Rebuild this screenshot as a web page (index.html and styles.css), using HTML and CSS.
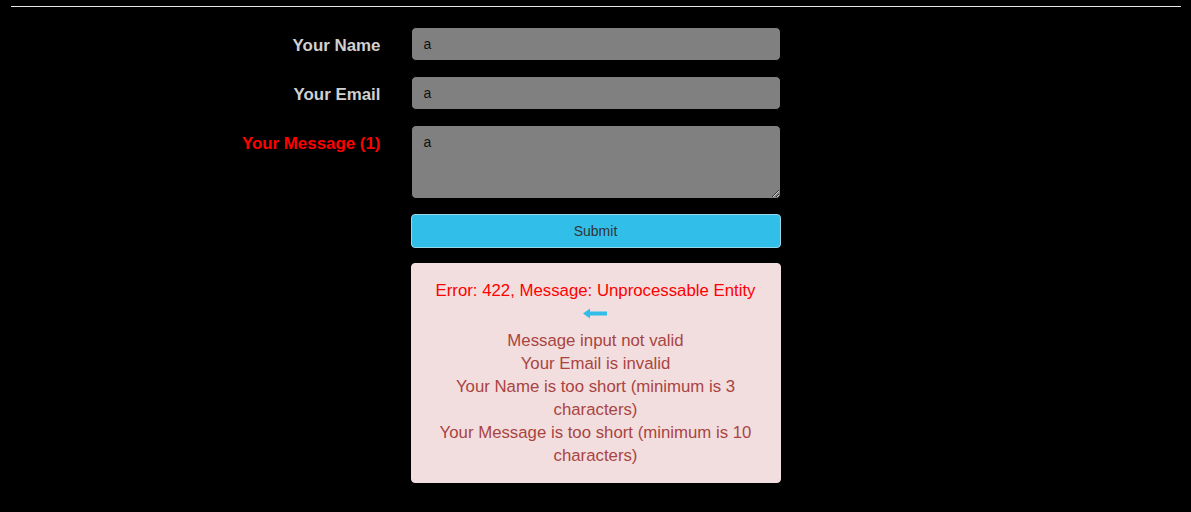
FILE: index.html
```html
<!DOCTYPE html>
<html>
<head>
<meta charset="utf-8">
<link rel="stylesheet" href="styles.css">
</head>
<body>
<div class="topbar"><hr class="rule"></div>
<form class="form">
  <label class="label" for="name">Your Name</label>
  <input class="control" id="name" type="text" value="a">
  <span></span>

  <label class="label" for="email">Your Email</label>
  <input class="control" id="email" type="text" value="a">
  <span></span>

  <label class="label label-error" for="msg">Your Message (1)</label>
  <textarea class="control textarea" id="msg">a</textarea>
  <span></span>

  <span></span>
  <button class="submit" type="button">Submit</button>
  <span></span>

  <span></span>
  <div class="alert">
    <div class="alert-title">Error: 422, Message: Unprocessable Entity</div>
    <div class="arrow"><svg width="25" height="11" viewBox="0 0 25 11"><path d="M0 5.5 L7 0.5 L7 3.5 L24 3.5 L24 7.5 L7 7.5 L7 10.5 Z" fill="#31bde8"/></svg></div>
    <div class="alert-line">Message input not valid</div>
    <div class="alert-line">Your Email is invalid</div>
    <div class="alert-line">Your Name is too short (minimum is 3 characters)</div>
    <div class="alert-line">Your Message is too short (minimum is 10 characters)</div>
  </div>
  <span></span>
</form>
</body>
</html>
```
FILE: styles.css
```css
html, body {
  margin: 0;
  padding: 0;
  background: #000;
}
body {
  font-family: "Liberation Sans", Arial, sans-serif;
  font-size: 16px;
  line-height: 1.42857;
  color: #ccc;
}
.topbar {
  padding: 6px 10px 0 11px;
  height: 1px;
}
.rule {
  margin: 0;
  border: 0;
  border-top: 1px solid #e6e6e6;
  height: 0;
}
.form {
  margin: 20px 0 0;
  display: grid;
  grid-template-columns: 1fr 370px 1fr;
  column-gap: 30px;
  row-gap: 15px;
  align-items: start;
}
.label {
  display: block;
  text-align: right;
  font-weight: bold;
  font-size: 16.9px;
  line-height: 20px;
  padding-top: 9px;
  color: #d0d0d0;
}
.label-error {
  color: #ff0000;
}
.control {
  box-sizing: border-box;
  display: block;
  width: 100%;
  height: 34px;
  margin: 0;
  padding: 6px 12px;
  border: 1px solid #000;
  border-radius: 5px;
  background: #808080;
  color: #111;
  font-family: "Liberation Sans", Arial, sans-serif;
  font-size: 14px;
  line-height: 20px;
  outline: none;
}
.textarea {
  height: 74px;
  resize: vertical;
}
.submit {
  box-sizing: border-box;
  display: block;
  width: 100%;
  height: 34px;
  margin: 0;
  padding: 6px 12px;
  border: 1px solid #9ad6ea;
  border-radius: 4px;
  background: #31bfe9;
  color: #333;
  font-family: "Liberation Sans", Arial, sans-serif;
  font-size: 14px;
  line-height: 20px;
}
.alert {
  box-sizing: border-box;
  padding: 15px 15px 15px;
  border: 1px solid #f2dede;
  border-radius: 4px;
  background: #f2dede;
  color: #a94442;
  text-align: center;
  font-size: 16.8px;
  line-height: 23px;
  min-height: 220px;
}
.alert-title {
  color: #ff0000;
}
.arrow {
  height: 27px;
  display: flex;
  justify-content: center;
  align-items: flex-start;
}
.arrow svg {
  display: block;
  margin-top: 6px;
  margin-left: -1px;
}
```
